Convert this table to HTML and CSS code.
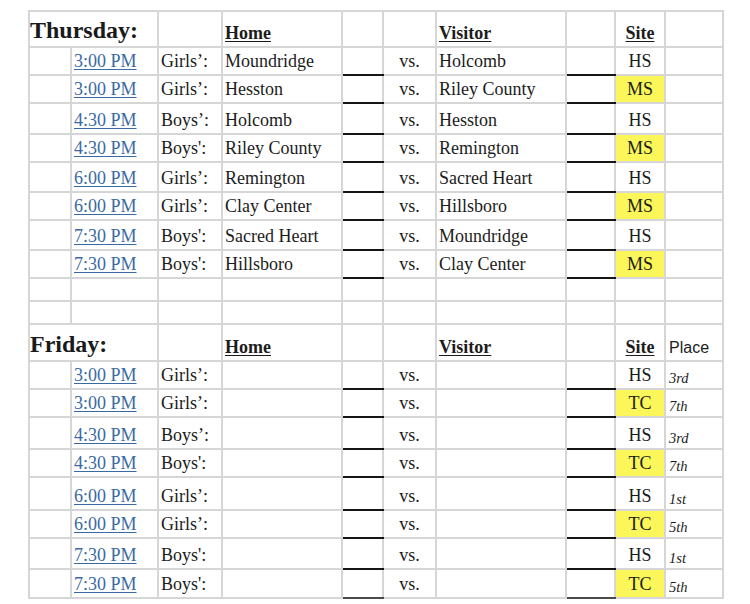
FILE: index.html
```html
<!DOCTYPE html>
<html>
<head>
<meta charset="utf-8">
<link rel="stylesheet" href="styles.css">
</head>
<body>
<table class="sched">
<colgroup>
<col class="c1"><col class="c2"><col class="c3"><col class="c4"><col class="c5"><col class="c6"><col class="c7"><col class="c8"><col class="c9"><col class="c10">
</colgroup>
<tbody>
<tr class="h36 head">
<td colspan="2" class="day">Thursday:</td><td></td><td class="hd">Home</td><td></td><td></td><td class="hd">Visitor</td><td></td><td class="hd ctr">Site</td><td></td>
</tr>
<tr class="h28"><td></td><td><a class="time" href="#">3:00 PM</a></td><td>Girls’:</td><td>Moundridge</td><td class="sc"></td><td class="vs">vs.</td><td>Holcomb</td><td class="sc"></td><td class="site">HS</td><td></td></tr>
<tr class="h28"><td></td><td><a class="time" href="#">3:00 PM</a></td><td>Girls’:</td><td>Hesston</td><td class="sc"></td><td class="vs">vs.</td><td>Riley County</td><td class="sc"></td><td class="site hl">MS</td><td></td></tr>
<tr class="h31"><td></td><td><a class="time" href="#">4:30 PM</a></td><td>Boys’:</td><td>Holcomb</td><td class="sc"></td><td class="vs">vs.</td><td>Hesston</td><td class="sc"></td><td class="site">HS</td><td></td></tr>
<tr class="h28"><td></td><td><a class="time" href="#">4:30 PM</a></td><td>Boys':</td><td>Riley County</td><td class="sc"></td><td class="vs">vs.</td><td>Remington</td><td class="sc"></td><td class="site hl">MS</td><td></td></tr>
<tr class="h30"><td></td><td><a class="time" href="#">6:00 PM</a></td><td>Girls’:</td><td>Remington</td><td class="sc"></td><td class="vs">vs.</td><td>Sacred Heart</td><td class="sc"></td><td class="site">HS</td><td></td></tr>
<tr class="h28"><td></td><td><a class="time" href="#">6:00 PM</a></td><td>Girls’:</td><td>Clay Center</td><td class="sc"></td><td class="vs">vs.</td><td>Hillsboro</td><td class="sc"></td><td class="site hl">MS</td><td></td></tr>
<tr class="h30"><td></td><td><a class="time" href="#">7:30 PM</a></td><td>Boys':</td><td>Sacred Heart</td><td class="sc"></td><td class="vs">vs.</td><td>Moundridge</td><td class="sc"></td><td class="site">HS</td><td></td></tr>
<tr class="h28"><td></td><td><a class="time" href="#">7:30 PM</a></td><td>Boys':</td><td>Hillsboro</td><td class="sc"></td><td class="vs">vs.</td><td>Clay Center</td><td class="sc"></td><td class="site hl">MS</td><td></td></tr>
<tr class="h23"><td></td><td></td><td></td><td></td><td></td><td></td><td></td><td></td><td></td><td></td></tr>
<tr class="h23"><td></td><td></td><td></td><td></td><td></td><td></td><td></td><td></td><td></td><td></td></tr>
<tr class="h37 head">
<td colspan="2" class="day">Friday:</td><td></td><td class="hd">Home</td><td></td><td></td><td class="hd">Visitor</td><td></td><td class="hd ctr">Site</td><td class="place-h">Place</td>
</tr>
<tr class="h28"><td></td><td><a class="time" href="#">3:00 PM</a></td><td>Girls’:</td><td></td><td class="sc"></td><td class="vs">vs.</td><td></td><td class="sc"></td><td class="site">HS</td><td class="pl">3rd</td></tr>
<tr class="h28"><td></td><td><a class="time" href="#">3:00 PM</a></td><td>Girls’:</td><td></td><td class="sc"></td><td class="vs">vs.</td><td></td><td class="sc"></td><td class="site hl">TC</td><td class="pl">7th</td></tr>
<tr class="h32"><td></td><td><a class="time" href="#">4:30 PM</a></td><td>Boys’:</td><td></td><td class="sc"></td><td class="vs">vs.</td><td></td><td class="sc"></td><td class="site">HS</td><td class="pl">3rd</td></tr>
<tr class="h28"><td></td><td><a class="time" href="#">4:30 PM</a></td><td>Boys':</td><td></td><td class="sc"></td><td class="vs">vs.</td><td></td><td class="sc"></td><td class="site hl">TC</td><td class="pl">7th</td></tr>
<tr class="h33"><td></td><td><a class="time" href="#">6:00 PM</a></td><td>Girls’:</td><td></td><td class="sc"></td><td class="vs">vs.</td><td></td><td class="sc"></td><td class="site">HS</td><td class="pl">1st</td></tr>
<tr class="h28"><td></td><td><a class="time" href="#">6:00 PM</a></td><td>Girls’:</td><td></td><td class="sc"></td><td class="vs">vs.</td><td></td><td class="sc"></td><td class="site hl">TC</td><td class="pl">5th</td></tr>
<tr class="h31"><td></td><td><a class="time" href="#">7:30 PM</a></td><td>Boys':</td><td></td><td class="sc"></td><td class="vs">vs.</td><td></td><td class="sc"></td><td class="site">HS</td><td class="pl">1st</td></tr>
<tr class="h29 last"><td></td><td><a class="time" href="#">7:30 PM</a></td><td>Boys':</td><td></td><td class="sc"></td><td class="vs">vs.</td><td></td><td class="sc"></td><td class="site hl">TC</td><td class="pl">5th</td></tr>
</tbody>
</table>
</body>
</html>
```
FILE: styles.css
```css
html, body {
  margin: 0;
  padding: 0;
  background: #ffffff;
}
body {
  font-family: "Liberation Serif", "Times New Roman", serif;
  font-size: 18px;
  color: #1c1c1c;
}
.sched {
  border-collapse: collapse;
  table-layout: fixed;
  width: 694px;
  margin: 10px 0 0 28px;
}
.c1 { width: 42px; }
.c2 { width: 87px; }
.c3 { width: 64px; }
.c4 { width: 120px; }
.c5 { width: 41px; }
.c6 { width: 53px; }
.c7 { width: 130px; }
.c8 { width: 49px; }
.c9 { width: 50px; }
.c10 { width: 58px; }

.sched td {
  border: 2px solid #d6d6d6;
  padding: 0 0 2px 2px;
  vertical-align: bottom;
  white-space: nowrap;
  overflow: hidden;
  line-height: 1.15;
}
.h23 { height: 23px; }
.h28 { height: 28px; }
.h29 { height: 29px; }
.h30 { height: 30px; }
.h31 { height: 31px; }
.h32 { height: 32px; }
.h33 { height: 33px; }
.h36 { height: 36px; }
.h37 { height: 37px; }

.time {
  color: #3a6aa3;
  text-decoration: underline;
  text-underline-offset: 2px;
}
.sched td.day {
  font-weight: bold;
  font-size: 24px;
  padding: 0 0 1px 0;
  color: #1a1a1a;
}
.sched td.hd {
  font-weight: bold;
  text-decoration: underline;
  text-underline-offset: 2px;
}
.sched td.ctr { text-align: center; padding-left: 0; }
.sched td.vs { text-align: center; padding-left: 0; }
.sched td.site { text-align: center; padding-left: 0; }
.sched td.hl { background: #fbf75a; }
.sched td.sc { border-bottom: 2px solid #151515; }
.sched .last td.sc { border-bottom-color: #4a4a4a; }
.sched td.place-h {
  font-family: "Liberation Sans", Arial, sans-serif;
  font-size: 16px;
  padding: 0 0 3px 3px;
}
.sched td.pl {
  font-style: italic;
  font-size: 14.5px;
  padding: 0 0 1px 3px;
}
```
